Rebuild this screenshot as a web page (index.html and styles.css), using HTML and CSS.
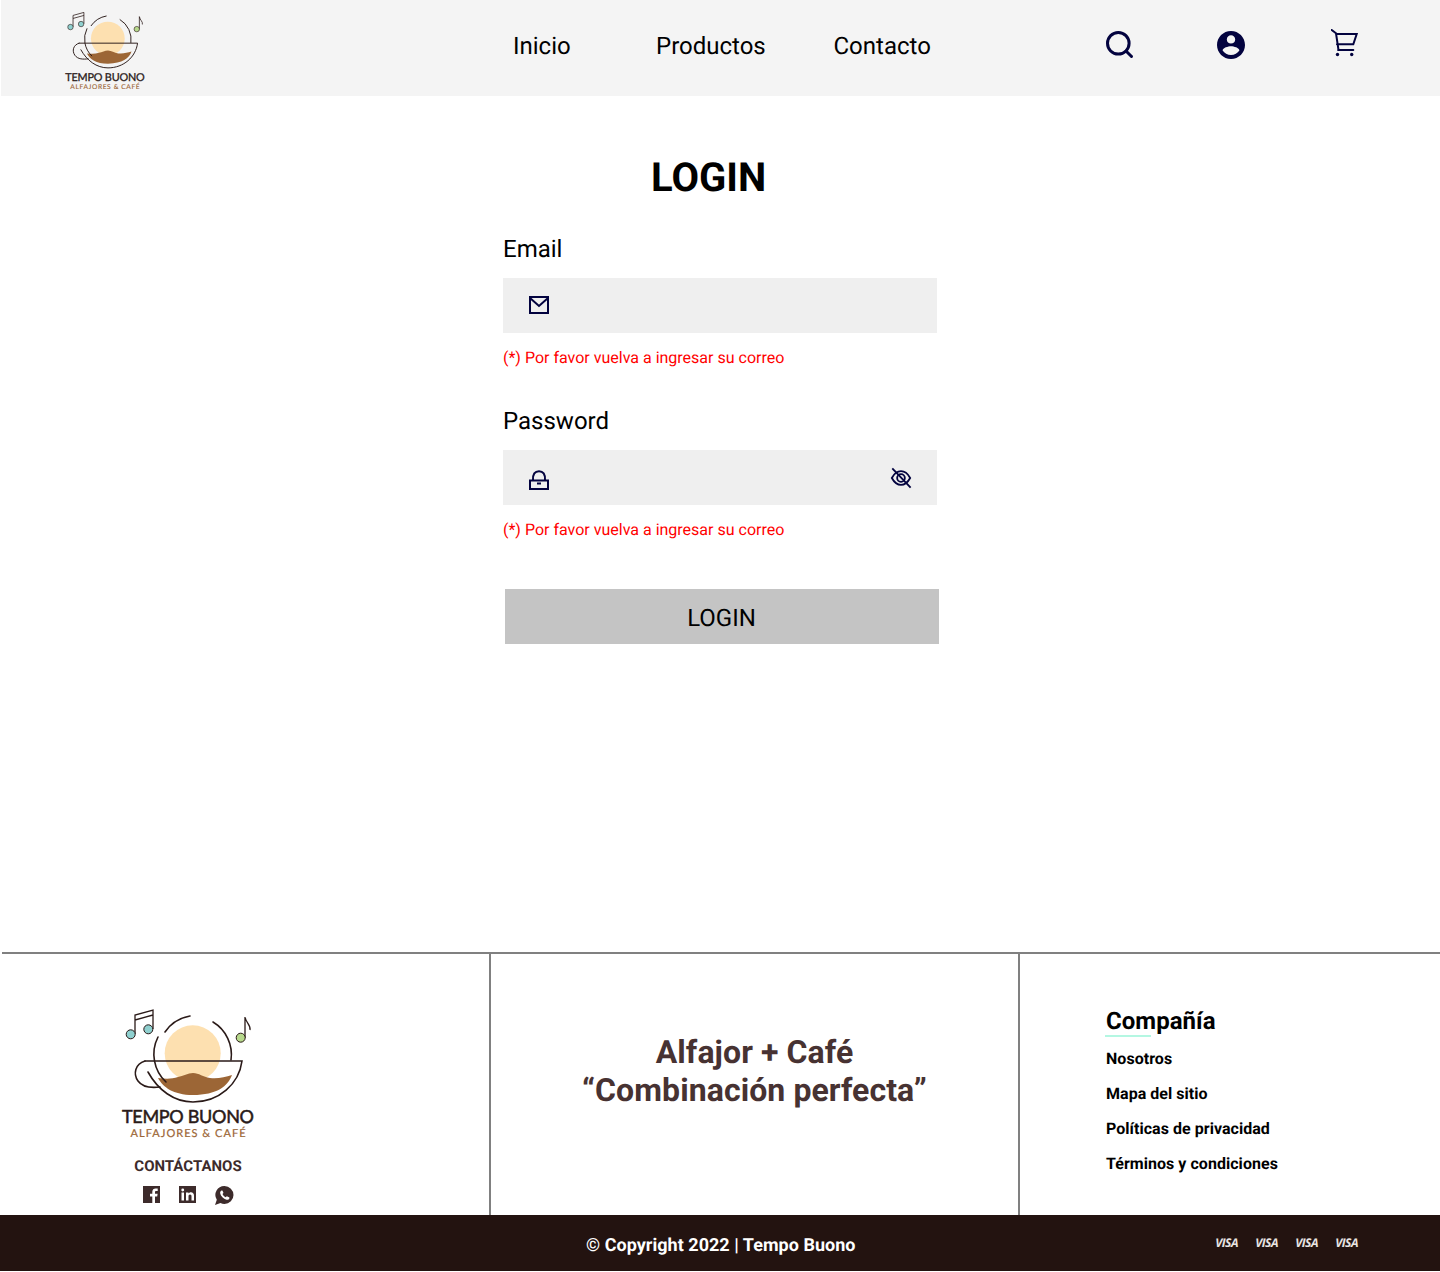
FILE: index.html
```html
<!DOCTYPE html>
<html lang="es">
<head>
<meta charset="utf-8">
<title>Tempo Buono - Login</title>
<link rel="stylesheet" href="styles.css">
</head>
<body>
<svg class="defs" width="0" height="0" aria-hidden="true">
  <defs>
    <g id="logo-art">
      <circle cx="72.700" cy="47.300" r="28" fill="#fde0b0"/>
      <path d="M38 72c8 1 14 1 20-1 5-1 10-4 15-4 6 0 10 4 17 5 8 1 15-1 22-3-4 11-15 20-39 20-20 0-30-8-35-17z" fill="#9c6636"/>
      <g fill="none" stroke="#2a1a18" stroke-width="1.600" stroke-linecap="round">
        <path d="M45 26A38 38 0 0 1 70 10"/>
        <path d="M93 16A38 38 0 0 1 111 54"/>
        <path d="M38 31A38 38 0 0 0 46 76"/>
        <path d="M25 55H122C119 78 99 96 73 96 54 96 38 84 28 66"/>
        <path d="M25 55C15 58 13 68 18 75 23 82 32 82 40 81"/>
      </g>
      <g fill="none" stroke="#2a1a18" stroke-width="1.300">
        <path d="M15 28V9L33 4V23M15 14 33 9"/>
        <path d="M125 32V11C126 17 131 19 130 24"/>
      </g>
      <circle cx="10.700" cy="28.300" r="4.500" fill="#8fd0cf" stroke="#2a1a18"/>
      <circle cx="28.300" cy="23.300" r="4.500" fill="#8fd0cf" stroke="#2a1a18"/>
      <circle cx="120.700" cy="31.700" r="4.500" fill="#b7d98c" stroke="#2a1a18"/>
      <text x="68" y="117" class="logo-name" text-anchor="middle" textLength="132" lengthAdjust="spacing">TEMPO BUONO</text>
      <text x="68" y="131" class="logo-sub" text-anchor="middle" textLength="115" lengthAdjust="spacing">ALFAJORES &amp; CAFÉ</text>
    </g>
  </defs>
</svg>

<header class="site-header">
  <svg class="logo-small" viewBox="0 0 136 136"><use href="#logo-art"/></svg>
  <nav class="main-nav">
    <a>Inicio</a>
    <a>Productos</a>
    <a>Contacto</a>
  </nav>
  <div class="header-icons">
    <svg class="icon-search" viewBox="0 0 28 28"><circle cx="12.300" cy="12.300" r="10.800"/><path d="M20 20 25.500 25.500"/></svg>
    <svg class="icon-user" viewBox="2 2 20 20"><path d="M12 2C6.480 2 2 6.480 2 12s4.480 10 10 10 10-4.480 10-10S17.520 2 12 2zm0 3c1.660 0 3 1.340 3 3s-1.340 3-3 3-3-1.340-3-3 1.340-3 3-3zm0 14.200c-2.500 0-4.710-1.280-6-3.220.030-1.990 4-3.080 6-3.080 1.990 0 5.970 1.090 6 3.080-1.290 1.940-3.500 3.220-6 3.220z"/></svg>
    <svg class="icon-cart" viewBox="0 0 27 28"><path class="line" d="M.7 1 5 4.300 7.300 19.500V21H22.300M5 5H25.700L22.300 15.300H6"/><circle cx="6.500" cy="25.500" r="1.700"/><circle cx="20.700" cy="25.500" r="1.700"/></svg>
  </div>
</header>

<main class="login">
  <h1 class="login-title">LOGIN</h1>
  <form class="login-form">
    <label class="field-label">Email</label>
    <div class="field">
      <svg class="field-icon mail" viewBox="0 0 20 18"><path d="M1 1H19V17H1ZM1 2 10 10 19 2"/></svg>
    </div>
    <p class="field-error">(*) Por favor vuelva a ingresar su correo</p>
    <label class="field-label">Password</label>
    <div class="field">
      <svg class="field-icon lock" viewBox="0 0 20 20"><path d="M1 10.500H19V19H1ZM4 10.500C3.500 4 6 1.200 10 1.200S16.500 4 16 10.500"/><path class="keyhole" d="M8 13.500H12"/></svg>
      <svg class="field-eye" viewBox="0 0 24 24"><path d="M2 12C5 6.500 8.500 4.500 12 4.500S19 6.500 22 12C19 17.500 15.500 19.500 12 19.500S5 17.500 2 12Z"/><circle cx="12" cy="12" r="4.200"/><path class="slash" d="M2.500 1.500 22.500 22.500"/></svg>
    </div>
    <p class="field-error">(*) Por favor vuelva a ingresar su correo</p>
    <button class="login-button" type="button">LOGIN</button>
  </form>
</main>

<footer class="site-footer">
  <div class="footer-columns">
    <section class="footer-brand">
      <svg class="logo-large" viewBox="0 0 136 136"><use href="#logo-art"/></svg>
      <p class="contact-title">CONTÁCTANOS</p>
      <div class="socials">
        <svg class="social" viewBox="0 0 17 17"><path d="M0 0H17V17H12V10.500H14.200L14.600 7.800H12V6.200C12 5.400 12.300 4.900 13.400 4.900H14.700V2.500C14.200 2.400 13.500 2.400 12.700 2.400 10.700 2.400 9.300 3.600 9.300 5.800V7.800H7V10.500H9.300V17H0Z"/></svg>
        <svg class="social" viewBox="0 0 17 17"><path fill-rule="evenodd" d="M0 0H17V17H0ZM2.500 6.500V14.500H5V6.500ZM3.750 2.500A1.450 1.450 0 1 0 3.750 5.400 1.450 1.450 0 0 0 3.750 2.500ZM7 6.500V14.500H9.500V10.300C9.500 9.100 10 8.400 11 8.400S12.500 9.100 12.500 10.300V14.500H15V9.800C15 7.500 13.800 6.300 12 6.300 10.800 6.300 10 6.900 9.500 7.600V6.500Z"/></svg>
        <svg class="social whatsapp" viewBox="0 0 19 19"><path fill-rule="evenodd" d="M9.500 0A9 9 0 0 1 9.500 18C8 18 6.700 17.700 5.500 17L0 19 1.800 13.800A9 9 0 0 1 9.500 0ZM6.500 4.500C5.500 5 5 6 5.200 7.300 5.800 10.200 8.500 13 11.500 13.700 13 14 14 13.300 14.400 12.200 14.500 11.800 14.400 11.500 14 11.300L12.300 10.400C12 10.300 11.700 10.300 11.500 10.600L10.800 11.300C9.500 10.800 8 9.300 7.500 8L8.200 7.300C8.400 7 8.500 6.700 8.300 6.400L7.500 4.800C7.300 4.500 6.900 4.400 6.500 4.500Z"/></svg>
      </div>
    </section>
    <section class="footer-slogan">
      <p>Alfajor + Café<br>“Combinación perfecta”</p>
    </section>
    <section class="footer-links">
      <h2 class="links-title">Compañía</h2>
      <a>Nosotros</a>
      <a>Mapa del sitio</a>
      <a>Políticas de privacidad</a>
      <a>Términos y condiciones</a>
    </section>
  </div>
  <div class="footer-bar">
    <span class="copyright">© Copyright 2022 | Tempo Buono</span>
    <div class="cards">
      <span>VISA</span><span>VISA</span><span>VISA</span><span>VISA</span>
    </div>
  </div>
</footer>
</body>
</html>
```

FILE: styles.css
```css
* {
  box-sizing: border-box;
}

html,
body {
  margin: 0;
  padding: 0;
  background: #fff;
}

body {
  font-family: Roboto, "Liberation Sans", sans-serif;
  color: #000;
  height: 1272px;
  overflow: hidden;
  text-rendering: geometricPrecision;
}

.defs {
  display: block;
  height: 0;
}

.logo-name {
  font-family: Lato, "Liberation Sans", sans-serif;
  font-size: 18px;
  font-weight: 400;
  fill: #2a1a18;
  stroke: #2a1a18;
  stroke-width: 0.5px;
}

.logo-sub {
  font-family: Lato, "Liberation Sans", sans-serif;
  font-size: 11px;
  fill: #9c6636;
  stroke: #9c6636;
  stroke-width: 0.2px;
}

/* Header */
.site-header {
  display: flex;
  align-items: flex-start;
  height: 96px;
  margin-left: 1px;
  padding-left: 63px;
  background: #f4f4f4;
}

.logo-small {
  width: 82px;
  height: 82px;
  margin-top: 10px;
  flex: none;
}

.main-nav {
  display: grid;
  grid-template-columns: 143px 177.500px auto;
  margin-left: 367px;
  margin-top: 32px;
  font-size: 24px;
  line-height: 28px;
}

.header-icons {
  display: flex;
  align-items: flex-start;
  margin-left: 175.500px;
}

.icon-search {
  width: 28px;
  height: 28px;
  margin-top: 31px;
  fill: none;
  stroke: #03033f;
  stroke-width: 3px;
  stroke-linecap: round;
}

.icon-user {
  width: 28px;
  height: 28px;
  margin-top: 31px;
  margin-left: 83px;
  fill: #03033f;
}

.icon-cart {
  width: 27px;
  height: 28px;
  margin-top: 29px;
  margin-left: 86px;
  fill: #03033f;
}

.icon-cart .line {
  fill: none;
  stroke: #03033f;
  stroke-width: 2px;
  stroke-linecap: round;
}

/* Login */
.login {
  height: 856px;
  padding-top: 58px;
}

.login-title {
  margin: 0 0 0 651px;
  font-size: 40px;
  line-height: 47px;
  font-weight: 700;
}

.login-form {
  display: flex;
  flex-direction: column;
  width: 436px;
  margin: 34px 0 0 503px;
}

.field-label {
  font-size: 24px;
  line-height: 28px;
}

.field {
  display: flex;
  align-items: center;
  justify-content: space-between;
  width: 434px;
  height: 55px;
  margin-top: 15px;
  padding: 0 25px 0 26px;
  background: #efefef;
}

.field-icon {
  width: 20px;
  height: 18px;
  fill: none;
  stroke: #03033f;
  stroke-width: 2px;
}

.field-icon.mail {
  margin-top: -1px;
}

.field-icon.lock {
  width: 20px;
  height: 20px;
  margin-top: 5px;
}

.field-eye {
  width: 22px;
  height: 22px;
  fill: none;
  stroke: #03033f;
  stroke-width: 2px;
}

.field-error {
  margin: 15px 0 40px;
  font-size: 16px;
  line-height: 19px;
  color: #f00;
}

.login-button {
  width: 434px;
  height: 55px;
  margin: 10px 0 0 2px;
  padding: 2px 1px 0 0;
  border: 0;
  background: #c4c4c4;
  font-family: inherit;
  font-size: 24px;
  line-height: 28px;
  color: #000;
  text-rendering: geometricPrecision;
}

/* Footer */
.site-footer {
  display: flex;
  flex-direction: column;
}

.footer-columns {
  display: grid;
  grid-template-columns: 489px 529px 1fr;
  height: 263px;
  margin-left: 2px;
  border-top: 2px solid #808080;
}

.footer-brand {
  display: flex;
  flex-direction: column;
  align-items: center;
  padding-top: 52px;
  padding-right: 115px;
  border-right: 2px solid #808080;
}

.logo-large {
  width: 136px;
  height: 136px;
  flex: none;
}

.contact-title {
  margin: 15px 0 0;
  font-size: 15px;
  line-height: 19px;
  font-weight: 700;
  color: #3d2b2b;
}

.socials {
  display: flex;
  align-items: flex-start;
  gap: 19px;
  margin-top: 10px;
}

.social {
  width: 17px;
  height: 17px;
  fill: #3d2b2b;
}

.social.whatsapp {
  width: 19px;
  height: 19px;
}

.footer-slogan {
  display: flex;
  justify-content: center;
  padding-top: 79px;
  border-right: 2px solid #808080;
}

.footer-slogan p {
  margin: 0;
  font-size: 32px;
  line-height: 38px;
  font-weight: 700;
  letter-spacing: 0.08px;
  text-align: center;
  color: #473232;
}

.footer-links {
  display: flex;
  flex-direction: column;
  align-items: flex-start;
  padding: 53px 0 0 86px;
  font-size: 16px;
  line-height: 19px;
  font-weight: 700;
  letter-spacing: 0.04px;
}

.footer-links a + a {
  margin-top: 16px;
}

.links-title {
  margin: 0 0 15px;
  font-size: 24px;
  line-height: 28px;
  font-weight: 700;
}

.links-title::after {
  content: "";
  display: block;
  width: 46px;
  height: 2px;
  margin: 0 0 -3px -1px;
  background: #b4f7e2;
}

.footer-bar {
  display: flex;
  align-items: center;
  height: 56px;
  padding: 0 82px 0 586px;
  background: #231310;
  color: #fff;
}

.copyright {
  margin-top: 4px;
  font-size: 18px;
  line-height: 21px;
  font-weight: 700;
  letter-spacing: 0.03px;
  white-space: nowrap;
}

.cards {
  display: grid;
  grid-template-columns: 40px 40px 40px auto;
  margin-left: auto;
  margin-bottom: 2px;
  font-family: "Open Sans", "Liberation Sans", sans-serif;
  font-size: 12px;
  font-style: italic;
  font-weight: 700;
  letter-spacing: -0.5px;
  color: #e8e4e2;
}
```
